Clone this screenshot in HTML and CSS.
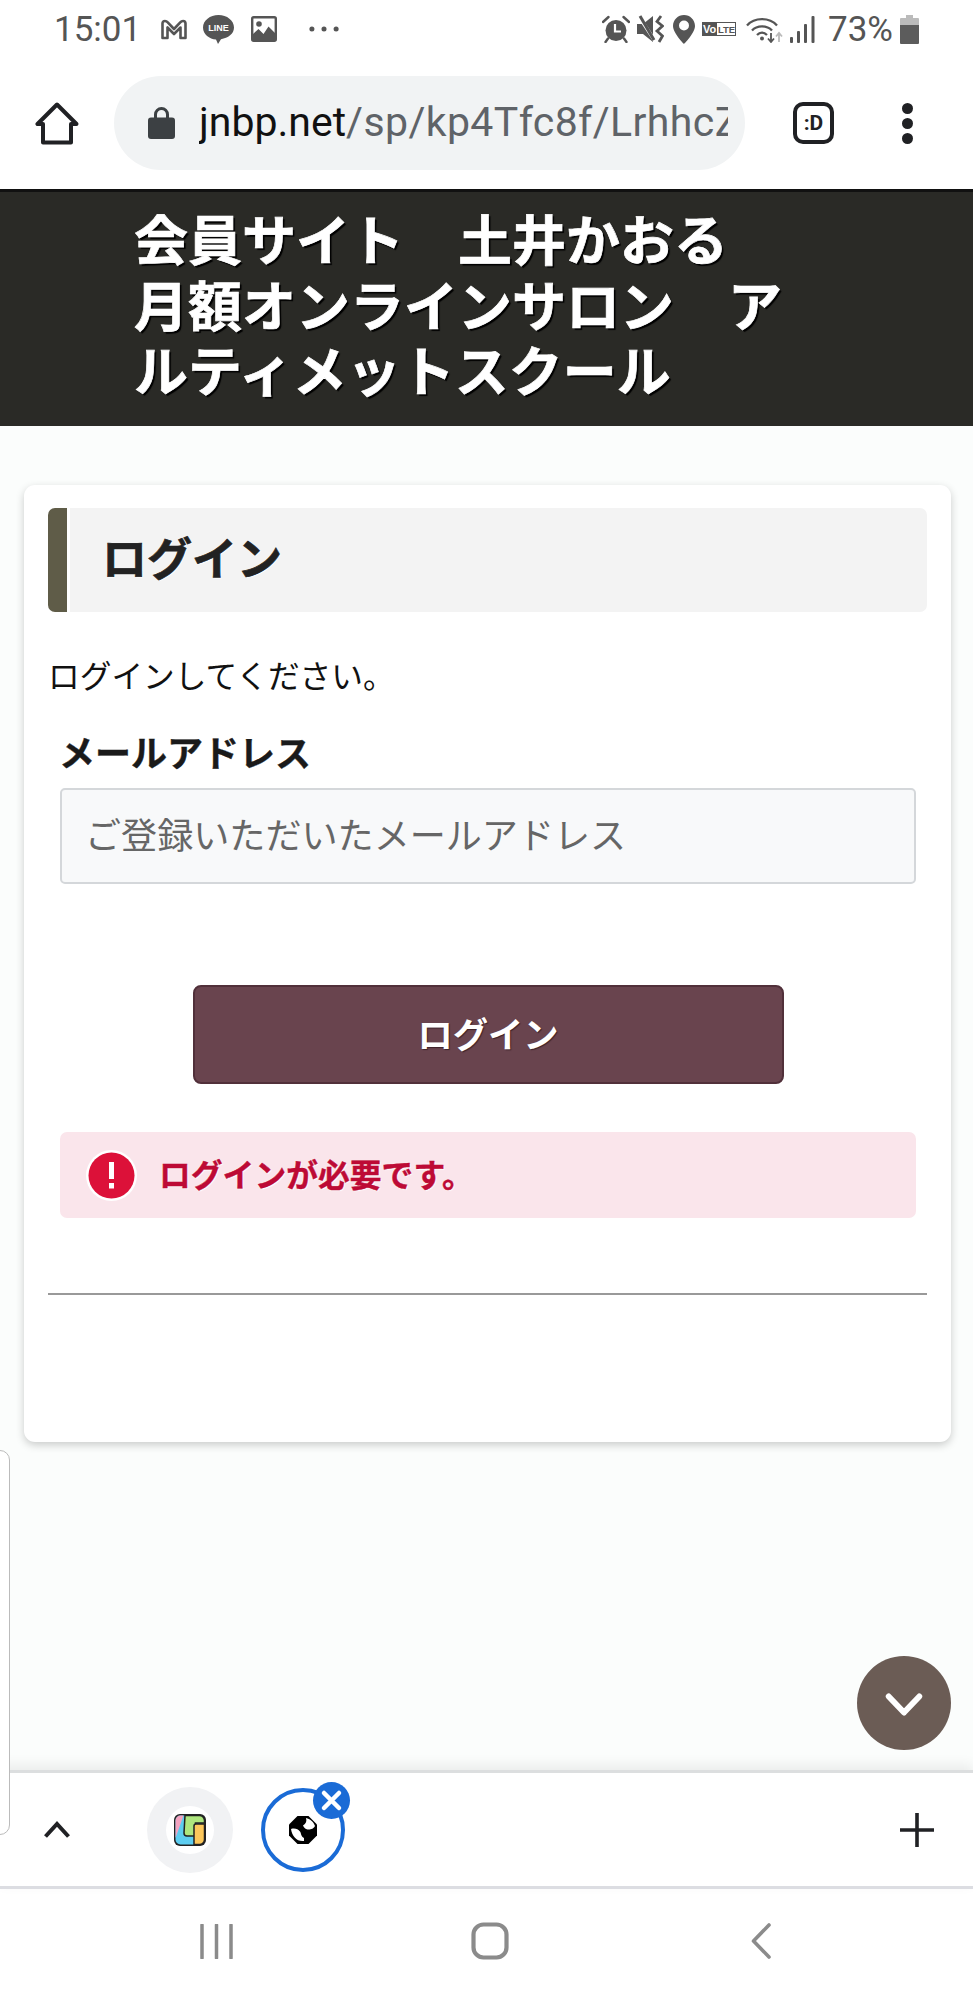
FILE: index.html
```html
<!DOCTYPE html>
<html lang="ja">
<head>
<meta charset="utf-8">
<title>ログイン</title>
<link rel="stylesheet" href="styles.css">
</head>
<body>
<div class="phone">
  <div class="status">
    <span class="time">15:01</span>
    <svg class="ic-m" viewBox="0 0 27 21"><path d="M2 19V4.500Q2 2 4.500 2 6 2 7 3.200L13.500 10 20 3.200Q21 2 22.500 2 25 2 25 4.500V19H20V8.500L13.500 15 7 8.500V19Z" fill="none" stroke="#555" stroke-width="2.600" stroke-linejoin="round"/></svg>
    <svg class="ic-line" viewBox="0 0 31 29"><path d="M15.500 0C7 0 0 5.500 0 12.500S6.500 24 13 24.500L15 29l3-4.800C25 23 31 19 31 12.500 31 5.500 24 0 15.500 0Z" fill="#555"/><text x="15.500" y="16" class="line-t">LINE</text></svg>
    <svg class="ic-img" viewBox="0 0 26 26"><rect x="1.200" y="1.200" width="23.600" height="23.600" rx="1.500" fill="#fff" stroke="#555" stroke-width="2.400"/><circle cx="8" cy="8" r="2.800" fill="#555"/><path d="M2 24V18l5.500-5 5 5 5-7.500L24 17v7Z" fill="#555"/></svg>
    <svg class="ic-dots" viewBox="0 0 32 6"><circle cx="3" cy="3" r="2.600" fill="#555"/><circle cx="15.500" cy="3" r="2.600" fill="#555"/><circle cx="28" cy="3" r="2.600" fill="#555"/></svg>
    <div class="status-right">
      <svg class="ic-alarm" viewBox="0 0 28 28"><path d="M1 7 6.500 2M27 7 21.500 2M6 23.500 3.500 27M22 23.500 24.500 27" stroke="#555" stroke-width="2.400" fill="none" stroke-linecap="round"/><circle cx="14" cy="15.500" r="10.500" fill="#555"/><path d="M13 9v7.500h6" stroke="#fff" stroke-width="2.200" fill="none"/></svg>
      <svg class="ic-mute" viewBox="0 0 27 28"><path d="M0 9h6L16 1v26L6 19H0Z" fill="#555"/><path d="M1 0 18 26" stroke="#fff" stroke-width="3.500"/><path d="M3 1 17 25" stroke="#555" stroke-width="3"/><path d="M24 1 20 6.500l5.500 4.500-5.500 5 5.500 5-3.500 6" stroke="#555" stroke-width="2.800" fill="none"/></svg>
      <svg class="ic-pin" viewBox="0 0 22 29"><path d="M11 0C5 0 0 4.800 0 11c0 7 11 18 11 18s11-11 11-18C22 4.800 17 0 11 0Zm0 15.500a5 5 0 1 1 0-10 5 5 0 0 1 0 10Z" fill="#555"/></svg>
      <svg class="ic-volte" viewBox="0 0 34 14"><rect x=".5" y=".5" width="33" height="13" fill="#fff" stroke="#555"/><rect width="15" height="14" fill="#555"/><text x="7.500" y="11" class="vo-t">Vo</text><text x="24.500" y="11" class="lte-t">LTE</text></svg>
      <svg class="ic-wifi" viewBox="0 0 37 27"><path d="M1 9.500C8.500 1 23.500 1 31 9.500M6 14.500C11 9 21 9 26 14.500M11 19c3-3 7-3 10 0" fill="none" stroke="#555" stroke-width="2.300"/><circle cx="16" cy="22.500" r="2" fill="#555"/><path d="M25 17v8M22 22.500l3 3.500 3-3.500" fill="none" stroke="#555" stroke-width="1.800"/><path d="M33 26v-8M30 20.500l3-3.500 3 3.500" fill="none" stroke="#bbb" stroke-width="1.800"/></svg>
      <svg class="ic-signal" viewBox="0 0 25 27"><rect x="0" y="21" width="3" height="6" rx="1" fill="#555"/><rect x="7" y="15" width="3" height="12" rx="1" fill="#555"/><rect x="14" y="8" width="3" height="19" rx="1" fill="#555"/><rect x="21.500" y="0" width="3" height="27" rx="1" fill="#555"/></svg>
      <span class="pct">73%</span>
      <svg class="ic-batt" viewBox="0 0 19 29"><path d="M6 0h7v3h5a1 1 0 0 1 1 1v6H0V4a1 1 0 0 1 1-1h5Z" fill="#bbb"/><path d="M0 10h19v18a1 1 0 0 1-1 1H1a1 1 0 0 1-1-1Z" fill="#5c5c5c"/></svg>
    </div>
  </div>

  <div class="toolbar">
    <svg class="ic-home" viewBox="0 0 44 43"><path d="M22 2.500 2.500 22H8v18.500h28V22h5.500Z" fill="none" stroke="#202124" stroke-width="4" stroke-linejoin="round"/></svg>
    <div class="omnibox">
      <svg class="ic-lock" viewBox="0 0 27 33"><path d="M7.500 13V8.500a6 6 0 0 1 12 0V13" fill="none" stroke="#3c4043" stroke-width="3"/><rect x="0" y="11.500" width="27" height="21.500" rx="3" fill="#3c4043"/></svg>
      <div class="url"><span class="host">jnbp.net</span><span class="path">/sp/kp4Tfc8f/LrhhcZ</span></div>
    </div>
    <div class="tabs-btn">:D</div>
    <div class="menu-dots"><i></i><i></i><i></i></div>
  </div>

  <main class="page">
    <header class="site-head">会員サイト　土井かおる<br>月額オンラインサロン　ア<br>ルティメットスクール</header>
    <section class="card">
      <div class="title"><span class="title-bar"></span><h1 class="title-text">ログイン</h1></div>
      <p class="lead">ログインしてください。</p>
      <form class="form">
        <label class="label">メールアドレス</label>
        <input class="input" type="text" placeholder="ご登録いただいたメールアドレス">
        <button class="btn" type="button">ログイン</button>
        <div class="alert">
          <svg class="ic-alert" viewBox="0 0 51 51"><circle cx="25.500" cy="25.500" r="25.500" fill="#fff"/><circle cx="25.500" cy="25.500" r="23" fill="#dc1139"/><rect x="23" y="12" width="5" height="17" fill="#fff"/><rect x="23" y="33" width="5" height="5.500" fill="#fff"/></svg>
          <span class="alert-text">ログインが必要です。</span>
        </div>
      </form>
      <hr class="rule">
    </section>
  </main>

  <div class="tabstrip">
    <svg class="ic-up" viewBox="0 0 28 18"><path d="M2.500 15.500 14 3l11.500 12.500" fill="none" stroke="#202124" stroke-width="4"/></svg>
    <div class="tab-a">
      <span class="tab-a-in">
        <svg class="ic-app" viewBox="0 0 32 32"><rect width="32" height="32" rx="6" fill="#222"/><rect x="1.500" y="1.500" width="29" height="29" rx="5" fill="#5dcdf0"/><path d="M1.500 24V6.500a5 5 0 0 1 5-5h3Z" fill="#f4a3c0"/><path d="M11 1.500h14.500a5 5 0 0 1 5 5V9h-9v13H13a3 3 0 0 1-3-3Z" fill="#aee67e" stroke="#222" stroke-width="1.500"/><path d="M22 10h8.500v15.500a5 5 0 0 1-5 5H20V12a2 2 0 0 1 2-2Z" fill="#fcc75b" stroke="#222" stroke-width="1.500"/></svg>
      </span>
    </div>
    <div class="tab-b">
      <svg class="ic-globe" viewBox="0 0 28 28"><path d="M8.500 0h11L28 8.500v11L19.500 28h-11L0 19.500v-11Z" fill="#000"/><path d="M2 13c4-1 7 0 9 2.500 1.500 2 .5 4.500 4 6.500v3c-7 1-12-5-13-12ZM14 9.500C17 8 18 5 17 2c4 1 7.500 3.500 9 8-2 3.500-5 3.500-7 3.500 0 0-3.500 0-5-4Z" fill="#fff"/></svg>
      <span class="tab-x"><svg viewBox="0 0 37 37"><path d="M11 11 26 26M26 11 11 26" stroke="#fff" stroke-width="4.500" stroke-linecap="round"/></svg></span>
    </div>
    <svg class="ic-plus" viewBox="0 0 34 34"><path d="M17 0v34M0 17h34" stroke="#202124" stroke-width="3.600"/></svg>
  </div>

  <nav class="navbar">
    <svg class="ic-recent" viewBox="0 0 33 35"><path d="M2 1v33M16.500 1v33M31 1v33" stroke="#8b8b8b" stroke-width="3.500" stroke-linecap="round"/></svg>
    <svg class="ic-square" viewBox="0 0 38 38"><rect x="2.500" y="2.500" width="33" height="33" rx="10" fill="none" stroke="#8b8b8b" stroke-width="4.200"/></svg>
    <svg class="ic-back" viewBox="0 0 20 36"><path d="M18 2 2.500 18 18 34" fill="none" stroke="#8b8b8b" stroke-width="3.600" stroke-linecap="round" stroke-linejoin="round"/></svg>
  </nav>

  <div class="side-tab"></div>
  <div class="fab"><svg viewBox="0 0 44 30"><path d="M5 6 22 24 39 6" fill="none" stroke="#fff" stroke-width="6.500" stroke-linecap="round" stroke-linejoin="round"/></svg></div>
</div>
</body>
</html>
```

FILE: styles.css
```css
* { box-sizing: border-box; }
html, body { margin: 0; padding: 0; background: #fff; }
body { font-family: "Noto Sans CJK JP", "Noto Sans", sans-serif; }
svg { display: block; flex: none; }

.phone { position: relative; width: 973px; height: 2000px; display: flex; flex-direction: column; overflow: hidden; }

/* status bar */
.status { height: 60px; flex: none; display: flex; align-items: center; padding: 0 54px 2px 54px; color: #555; font-family: Roboto, sans-serif; }
.time { font-size: 35px; width: 84px; line-height: 1; margin-right: 22px; }
.ic-m { width: 28px; height: 21px; }
.ic-line { width: 31px; height: 29px; margin-left: 15px; }
.line-t { font: 900 9px "Liberation Sans", sans-serif; fill: #fff; text-anchor: middle; }
.ic-img { width: 26px; height: 26px; margin-left: 17px; }
.ic-dots { width: 31px; height: 6px; margin-left: 32px; }
.status-right { margin-left: auto; display: flex; align-items: center; }
.ic-alarm { width: 28px; height: 28px; }
.ic-mute { width: 27px; height: 28px; margin-left: 7px; }
.ic-pin { width: 22px; height: 29px; margin-left: 9px; }
.ic-volte { width: 34px; height: 14px; margin-left: 7px; }
.vo-t { font: 700 11px "Liberation Sans", sans-serif; fill: #fff; text-anchor: middle; }
.lte-t { font: 700 9.500px "Liberation Sans", sans-serif; fill: #555; text-anchor: middle; }
.ic-wifi { width: 37px; height: 27px; margin-left: 10px; }
.ic-signal { width: 25px; height: 27px; margin-left: 7px; }
.pct { font-size: 35px; line-height: 1; margin-left: 13px; width: 63px; white-space: nowrap; }
.ic-batt { width: 19px; height: 29px; margin-left: 9px; }

/* browser toolbar */
.toolbar { height: 129px; flex: none; display: flex; align-items: center; padding: 0 0 3px 35px; background: #fff; }
.ic-home { width: 44px; height: 43px; }
.omnibox { width: 631px; height: 94px; margin-left: 35px; border-radius: 47px; background: #f1f3f4; display: flex; align-items: center; padding: 0 17px 0 34px; }
.ic-lock { width: 27px; height: 33px; margin-top: -2px; }
.url { margin-left: 24px; font: 41px/1.2 Roboto, sans-serif; color: #5f6368; white-space: nowrap; overflow: hidden; flex: 1; min-width: 0; }
.host { color: #111; }
.path { letter-spacing: .4px; }
.tabs-btn { width: 41px; height: 42px; margin-left: 48px; border: 4px solid #202124; border-radius: 10px; font: 700 21px/34px Roboto, sans-serif; text-align: center; color: #202124; }
.menu-dots { margin-left: 68px; display: flex; flex-direction: column; gap: 4px; }
.menu-dots i { display: block; width: 11px; height: 11px; border-radius: 50%; background: #202124; }

/* page */
.page { flex: 1; min-height: 0; background: #fbfdfc; }
.site-head { height: 237px; background: #2a2a26; border-top: 3px solid #111; padding: 13px 0 0 134px; color: #fff; font-size: 54px; font-weight: 700; line-height: 65.500px; -webkit-text-stroke: .7px #fff; text-shadow: 2px 2px 1px #000; white-space: nowrap; }
.card { margin: 59px 22px 0 24px; height: 957px; padding: 23px 24px; background: #fff; border-radius: 11px; box-shadow: 0 3px 8px rgba(0,0,0,.2); }
.title { display: flex; height: 104px; }
.title-bar { width: 19px; background: #5f5c48; border-radius: 7px 0 0 7px; }
.title-text { flex: 1; margin: 0 0 0 3px; background: #f3f3f3; border-radius: 0 7px 7px 0; padding-left: 32px; font-size: 45px; font-weight: 700; line-height: 97px; color: #222; -webkit-text-stroke: .7px #222; text-shadow: 1px 1px 1px #fff; }
.lead { margin: 40px 0 0; font-size: 31.700px; line-height: 45px; color: #111; }
.form { margin: 0 11px 0 12px; display: flex; flex-direction: column; }
.label { margin: 29px 0 0 -1px; font-size: 36px; font-weight: 700; line-height: 50px; color: #1a1a1a; -webkit-text-stroke: .4px #1a1a1a; }
.input { margin-top: 12px; height: 96px; width: 100%; padding: 0 23px 6px; background: #f8f9fa; border: 2px solid #d4d7da; border-radius: 5px; font-family: inherit; font-size: 36.100px; outline: none; }
.input::placeholder { color: #666; opacity: 1; }
.btn { align-self: center; width: 591px; height: 99px; margin-top: 101px; padding: 0 0 5px; background: #69444e; border: 2px solid #51303a; border-radius: 8px; color: #fff; font-family: inherit; font-size: 35.300px; font-weight: 700; text-shadow: 1px 1px 1px #3c2229; }
.alert { margin-top: 48px; height: 86px; display: flex; align-items: center; padding: 0 0 0 26px; background: #fae5eb; border-radius: 7px; }
.ic-alert { width: 51px; height: 51px; }
.alert-text { margin-left: 22px; margin-bottom: 5px; font-size: 31.800px; font-weight: 700; color: #bd0a35; -webkit-text-stroke: .4px #bd0a35; text-shadow: 1px 1px 1px #fff; }
.rule { margin: 75px 0 0; border: 0; border-top: 2px solid #999; }

/* tab strip */
.tabstrip { position: relative; height: 119px; flex: none; display: flex; align-items: center; padding-left: 43px; background: #fff; border-top: 3px solid #dcdedf; border-bottom: 3px solid #dcdde2; box-shadow: 0 -5px 12px rgba(0,0,0,.07); }
.ic-up { width: 28px; height: 18px; }
.tab-a { width: 86px; height: 86px; margin-left: 76px; border-radius: 50%; background: #f1f2f4; display: flex; align-items: center; justify-content: center; }
.tab-a-in { width: 48px; height: 48px; border-radius: 50%; background: #fff; display: flex; align-items: center; justify-content: center; }
.ic-app { width: 32px; height: 32px; }
.tab-b { position: relative; width: 84px; height: 84px; margin-left: 28px; border: 4px solid #1a6bd6; border-radius: 50%; display: flex; align-items: center; justify-content: center; }
.ic-globe { width: 28px; height: 28px; }
.tab-x { position: absolute; right: -9px; top: -10px; width: 37px; height: 37px; border-radius: 50%; background: #1a6bd6; }
.ic-plus { width: 34px; height: 34px; margin-left: 555px; }

/* navigation */
.navbar { height: 111px; flex: none; display: flex; align-items: center; padding: 0 0 7px 200px; background: #fff; }
.ic-recent { width: 33px; height: 35px; }
.ic-square { width: 38px; height: 38px; margin-left: 238px; }
.ic-back { width: 20px; height: 36px; margin-left: 242px; }

/* overlays */
.side-tab { position: absolute; left: -20px; top: 1450px; width: 30px; height: 385px; background: #fff; border: 1px solid #bbb; border-radius: 10px; }
.fab { position: absolute; left: 857px; top: 1656px; width: 94px; height: 94px; border-radius: 50%; background: #6b5c55; display: flex; align-items: center; justify-content: center; }
.fab svg { width: 40px; height: 27px; margin-top: 2px; }
```
